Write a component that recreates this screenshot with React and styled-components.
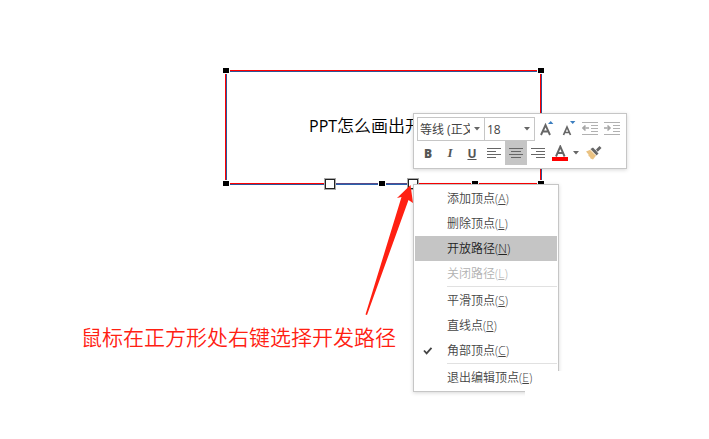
import React from "react";
import styled, { createGlobalStyle } from "styled-components";

const menuGroups = [
  [
    { label: "添加顶点", letter: "A" },
    { label: "删除顶点", letter: "L" },
    { label: "开放路径", letter: "N", active: true },
    { label: "关闭路径", letter: "L", disabled: true },
  ],
  [
    { label: "平滑顶点", letter: "S" },
    { label: "直线点", letter: "R" },
    { label: "角部顶点", letter: "C", checked: true },
  ],
  [{ label: "退出编辑顶点", letter: "E" }],
];

const Caret = () => (
  <CaretIcon width="6" height="4" viewBox="0 0 6 4" aria-hidden="true">
    <path d="M0 0h6L3 3.4z" fill="#666" />
  </CaretIcon>
);

const AlignIcon = ({ lines }) => (
  <svg width="16" height="14" viewBox="0 0 16 14" aria-hidden="true">
    {lines.map(([x, w], i) => (
      <rect key={i} x={x} y={2 + i * 3} width={w} height="1" fill="#666" />
    ))}
  </svg>
);

const IndentIcon = ({ right }) => (
  <svg width="16" height="14" viewBox="0 0 16 14" aria-hidden="true">
    <path
      d="M0 .5h16M9 3.5h7M9 6.5h7M9 9.5h7M0 12.5h16"
      stroke="#b1b1b1"
      fill="none"
    />
    <path
      d={right ? "M0 6h6M3.5 3.5l2.500 2.500-2.500 2.500" : "M1 6h6M3.500 3.500L1 6l2.500 2.500"}
      stroke="#a6a6a6"
      strokeWidth="1.6"
      fill="none"
    />
  </svg>
);

const Outline = () => (
  <ShapeSvg width="324" height="124" viewBox="0 0 324 124" aria-hidden="true">
    <path d="M4 4.5H319M4 117.5H319" stroke="#2f5597" strokeWidth="1" />
    <path d="M4.5 4V117M319.5 4V117" stroke="#2f5597" strokeWidth="1" />
    <path d="M4 3.5H319M4 116.5H104M196 116.5H319" stroke="#f00" />
    <path d="M3.5 4V117M318.5 4V117" stroke="#f00" />
    <path d="M104 116.5H196" stroke="#5a4a86" />
    <path d="M104 117.5H196" stroke="#2862ae" />
    {[
      [1, 1],
      [316, 1],
      [1, 114],
      [157, 114],
      [250, 114],
      [316, 114],
    ].map(([x, y]) => (
      <g key={x + "-" + y}>
        <rect x={x - 1} y={y - 1} width="8" height="7" fill="#fff" />
        <rect x={x} y={y} width="6" height="5" fill="#000" />
      </g>
    ))}
    {[103, 186].map((x) => (
      <g key={x}>
        <rect x={x - 1} y="111" width="12" height="12" fill="#a9a9a9" />
        <rect
          x={x + 0.5}
          y="112.5"
          width="9"
          height="9"
          fill="#fff"
          stroke="#222"
        />
      </g>
    ))}
  </ShapeSvg>
);

const Toolbar = () => (
  <MiniToolbar role="toolbar" aria-label="格式">
    <ToolRow>
      <Field $width={68}>
        <Select aria-label="字体" defaultValue="等线">
          <option value="等线">等线 (正文)</option>
        </Select>
        <Caret />
      </Field>
      <Field $width={50}>
        <Select aria-label="字号" defaultValue="18">
          <option>18</option>
        </Select>
        <Caret />
      </Field>
      <Tool aria-label="增大字号">
        <svg width="16" height="16" viewBox="0 0 16 16">
          <path d="M3 14L7.500 4L12 14M4.600 10.500h5.800" stroke="#666" strokeWidth="1.9" fill="none" />
          <path d="M10 3h5.400L12.700 0z" fill="#3c7ebf" />
        </svg>
      </Tool>
      <Tool aria-label="减小字号">
        <svg width="16" height="16" viewBox="0 0 16 16">
          <path d="M3.500 14L7 6L10.500 14M4.700 11.500h4.600" stroke="#666" strokeWidth="1.700" fill="none" />
          <path d="M10 0h5.400L12.700 3z" fill="#3c7ebf" />
        </svg>
      </Tool>
      <Tool aria-label="减少缩进" disabled>
        <IndentIcon />
      </Tool>
      <Tool aria-label="增加缩进" disabled>
        <IndentIcon right />
      </Tool>
    </ToolRow>
    <ToolRow>
      <Tool aria-label="加粗">
        <b>B</b>
      </Tool>
      <Tool aria-label="倾斜">
        <Italic>I</Italic>
      </Tool>
      <Tool aria-label="下划线">
        <Underlined>U</Underlined>
      </Tool>
      <Tool aria-label="左对齐">
        <AlignIcon lines={[[1, 14], [1, 9], [1, 14], [1, 9]]} />
      </Tool>
      <Tool aria-label="居中" aria-pressed="true" $active>
        <AlignIcon lines={[[1, 14], [3, 10], [1, 14], [3, 10]]} />
      </Tool>
      <Tool aria-label="右对齐">
        <AlignIcon lines={[[1, 14], [6, 9], [1, 14], [6, 9]]} />
      </Tool>
      <Tool aria-label="字体颜色">
        <svg width="16" height="16" viewBox="0 0 16 16">
          <path d="M4 11.500L8.300 1.500L12.600 11.500M5.500 8h5.600" stroke="#666" strokeWidth="1.900" fill="none" />
          <rect y="12" width="16" height="4" fill="#f00" />
        </svg>
      </Tool>
      <Tool aria-label="更多颜色" $narrow>
        <Caret />
      </Tool>
      <Tool aria-label="格式刷" $wide>
        <svg width="16" height="16" viewBox="0 0 16 16">
          <path d="M0 6.500L5 4.500L10.500 10L7 14.500L4.500 13.500L4 12L2.500 11L2.500 9.500z" fill="#eac282" />
          <path d="M4.500 4L7 2.500L12.500 8.500L10.500 10.500z" fill="#666" />
          <path d="M9 5.500L13.500 1L15.500 3L11 7.500z" fill="#666" />
          <path d="M4.200 4.600L10.200 10.600" stroke="#fff" strokeWidth=".8" />
          <path d="M8.500 3L12 7.500" stroke="#eee" strokeWidth=".8" />
        </svg>
      </Tool>
    </ToolRow>
  </MiniToolbar>
);

const App = () => {
  return (
    <Slide>
      <GlobalStyle />
      <Outline />
      <Title>
        <span>PPT</span>怎么画出开
      </Title>
      <Toolbar />
      <Menu role="menu">
        {menuGroups.map((group, i) => (
          <React.Fragment key={i}>
            {i > 0 && <Divider />}
            {group.map((item) => (
              <MenuItem
                key={item.label}
                role={item.checked ? "menuitemcheckbox" : "menuitem"}
                aria-checked={item.checked}
                disabled={item.disabled}
                $active={item.active}
              >
                <Mark>
                  {item.checked && (
                    <svg width="10" height="8" viewBox="0 0 10 8">
                      <path d="M1 3.500l2.600 2.800L8.500 .8" stroke="#444" strokeWidth="1.800" fill="none" />
                    </svg>
                  )}
                </Mark>
                <span>
                  {item.label}(<u>{item.letter}</u>)
                </span>
              </MenuItem>
            ))}
          </React.Fragment>
        ))}
        <Corner width="42" height="28" viewBox="0 0 42 28" aria-hidden="true">
          <path d="M10 0H42V28H1V13H7Q10 12 10 9z" fill="#fff" />
        </Corner>
      </Menu>
      <ArrowSvg width="52" height="132" viewBox="0 0 52 132" aria-hidden="true">
        <path
          d="M46.500 0L49 18L44.500 15L3 130L1.500 129.500L37.500 12L33 13z"
          fill="#ff2012"
        />
      </ArrowSvg>
      <Note>鼠标在正方形处右键选择开发路径</Note>
    </Slide>
  );
};

const GlobalStyle = createGlobalStyle`
  * {
    box-sizing: border-box;
  }
  body {
    margin: 0;
    background: #fff;
    font-family: "Open Sans", "Noto Sans CJK SC", sans-serif;
  }
  button,
  select {
    font-family: inherit;
  }
`;

/* free canvas, the shape and popups are placed on it */
const Slide = styled.main`
  position: relative;
  min-height: 100vh;
  overflow: hidden;
`;

const ShapeSvg = styled.svg`
  position: absolute;
  left: 222px;
  top: 67px;
`;

const Title = styled.div`
  position: absolute;
  left: 309px;
  top: 114px;
  display: flex;
  align-items: baseline;
  font-size: 17px;
  line-height: 24px;
  font-weight: 350;
  white-space: nowrap;
  color: #000;

  span {
    font-size: 16px;
    font-weight: 400;
  }
`;

const MiniToolbar = styled.div`
  position: absolute;
  left: 413px;
  top: 113px;
  padding: 3px;
  border: 1px solid #c6c6c6;
  background: #fff;
  box-shadow: 0 1px 4px rgba(0, 0, 0, 0.16);
`;

const ToolRow = styled.div`
  display: flex;
  height: 24px;
`;

const Field = styled.div`
  display: grid;
  align-items: center;
  width: ${({ $width }) => $width}px;
  border: 1px solid #c6c6c6;

  & + & {
    border-left: 0;
  }

  > * {
    grid-area: 1 / 1;
  }

  > svg {
    justify-self: end;
    margin-right: 4px;
  }
`;

const Select = styled.select`
  appearance: none;
  width: 100%;
  height: 22px;
  padding: 0 14px 0 2px;
  border: 0;
  background: transparent;
  font-size: 12px;
  color: #444;
`;

const CaretIcon = styled.svg`
  pointer-events: none;
`;

const Tool = styled.button`
  display: flex;
  align-items: center;
  justify-content: center;
  flex: none;
  width: ${({ $narrow, $wide }) => ($narrow ? 10 : $wide ? 26 : 22)}px;
  padding: 0;
  border: 0;
  background: ${({ $active }) => ($active ? "#c5c5c5" : "transparent")};
  font-size: 12px;
  font-weight: 700;
  color: #555;
`;

const Italic = styled.i`
  font-family: "Liberation Serif", serif;
  font-size: 13px;
`;

const Underlined = styled.span`
  text-decoration: underline;
`;

const Menu = styled.div`
  position: absolute;
  left: 413px;
  top: 184px;
  width: 146px;
  padding: 1px;
  border: 1px solid #c6c6c6;
  background: #fff;
  box-shadow: 0 1px 4px rgba(0, 0, 0, 0.16);
`;

const MenuItem = styled.button`
  display: flex;
  align-items: center;
  width: 100%;
  height: 25px;
  padding: 0;
  border: 0;
  background: ${({ $active }) => ($active ? "#c5c5c5" : "transparent")};
  font-size: 12px;
  line-height: 16px;
  font-weight: 350;
  white-space: nowrap;
  color: ${({ $active }) => ($active ? "#222" : "#444")};

  &:disabled {
    color: #b1b1b1;
  }

  u {
    text-underline-offset: 1px;
  }
`;

const Mark = styled.span`
  display: flex;
  flex: none;
  width: 32px;
  padding-left: 8px;
`;

const Divider = styled.hr`
  height: 1px;
  margin: 0 0 1px 32px;
  border: 0;
  background: #e1e1e1;
`;

const Corner = styled.svg`
  position: absolute;
  right: -8px;
  bottom: -8px;
`;

const ArrowSvg = styled.svg`
  position: absolute;
  left: 364px;
  top: 185px;
`;

const Note = styled.p`
  position: absolute;
  left: 81px;
  top: 321px;
  margin: 0;
  font-size: 21px;
  line-height: 32px;
  font-weight: 350;
  white-space: nowrap;
  color: #ff2012;
`;

export default App;
